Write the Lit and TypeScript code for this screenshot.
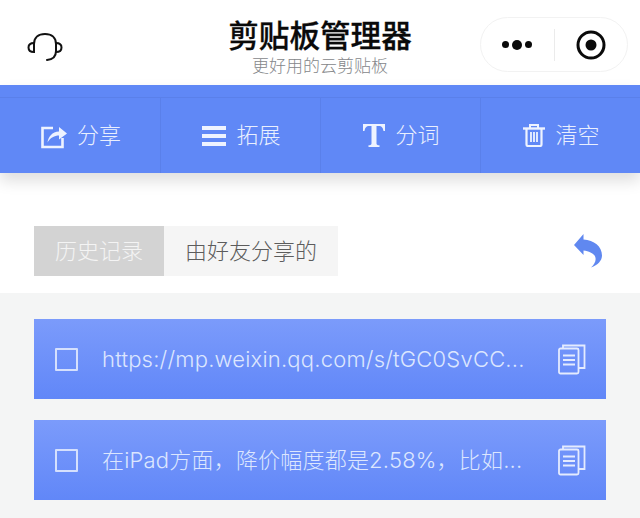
import { LitElement, html, css } from 'lit';
import { customElement } from 'lit/decorators.js';

const TOOLS = [
  { label: '分享', icon: 'share' },
  { label: '拓展', icon: 'menu' },
  { label: '分词', icon: 'text' },
  { label: '清空', icon: 'trash' },
];

const ITEMS = [
  'https://mp.weixin.qq.com/s/tGC0SvCC...',
  '在iPad方面，降价幅度都是2.58%，比如...',
];

@customElement('app-root')
export class AppRoot extends LitElement {
  static styles = css`
    :host {
      display: block;
      width: 640px;
      height: 518px;
      overflow: hidden;
      background: #f4f5f5;
      font-family: 'Inter', 'Noto Sans CJK SC', sans-serif;
      font-weight: 300;
    }

    * {
      box-sizing: border-box;
    }

    /* Header */
    .header {
      height: 85px;
      background: #fff;
      display: grid;
      grid-template-columns: 160px 1fr 160px;
      align-items: start;
    }

    .support {
      padding: 32px 0 0 27px;
    }

    .titles {
      display: flex;
      flex-direction: column;
      align-items: center;
    }

    .title {
      margin-top: 15px;
      font-family: 'Noto Sans CJK SC', sans-serif;
      font-size: 30.6px;
      line-height: 38px;
      font-weight: 500;
      -webkit-text-stroke: 0.3px #0a0a0a;
      color: #0a0a0a;
    }

    .subtitle {
      font-family: 'Noto Sans CJK SC', sans-serif;
      font-size: 17px;
      line-height: 20px;
      margin-top: 2px;
      color: #85878a;
    }

    .capsule {
      margin: 17px 12px 0 0;
      width: 148px;
      height: 55px;
      border: 1px solid #f2f2f2;
      border-radius: 28px;
      display: flex;
      align-items: center;
      justify-self: end;
    }

    .capsule .more,
    .capsule .target {
      flex: 1;
      display: flex;
      justify-content: center;
      align-items: center;
    }

    .capsule .more {
      border-right: 1px solid #ebebeb;
      height: 32px;
      gap: 3px;
    }

    .dot {
      width: 7px;
      height: 7px;
      border-radius: 50%;
      background: #0a0a0a;
    }

    .dot.mid {
      width: 10px;
      height: 10px;
    }

    /* Toolbar */
    .toolbar {
      height: 88px;
      padding-top: 12px;
      background: #6088f6;
      box-shadow: 0 8px 14px rgba(0, 0, 0, 0.13);
      position: relative;
    }

    .tools {
      height: 76px;
      border-top: 1px solid #5a80ea;
      display: grid;
      grid-template-columns: repeat(4, 1fr);
    }

    .tool {
      display: flex;
      align-items: center;
      justify-content: center;
      gap: 10px;
      border-left: 1px solid #5a80ea;
      font-family: 'Noto Sans CJK SC', sans-serif;
      font-size: 22px;
      font-weight: 300;
      color: #e9effe;
      padding-left: 2px;
    }

    .tool:first-child {
      border-left: none;
    }

    .tool span {
      margin-bottom: 6px;
    }

    .tool svg {
      display: block;
    }

    /* Tabs */
    .tabs-row {
      height: 120px;
      background: #fff;
      padding: 53px 34px 0;
      display: flex;
      justify-content: space-between;
      align-items: flex-start;
    }

    .tabs {
      display: flex;
      font-family: 'Noto Sans CJK SC', sans-serif;
      font-size: 22px;
      font-weight: 300;
      height: 50px;
    }

    .tab {
      display: flex;
      align-items: center;
      justify-content: center;
      color: #5c5c5c;
      background: #f5f5f5;
      width: 174px;
      padding-bottom: 5px;
    }

    .tab.active {
      width: 130px;
      background: #d3d3d3;
      color: #f4f4f4;
    }

    .back {
      margin: 8px 4px 0 0;
    }

    /* List */
    .list {
      padding: 26px 34px 0;
      display: flex;
      flex-direction: column;
      gap: 21px;
    }

    .card {
      height: 80px;
      background: linear-gradient(#7b9bfb, #6187f8);
      display: flex;
      align-items: center;
      padding: 0 20px 0 21px;
      color: #dce6fe;
    }

    .check {
      width: 23px;
      height: 23px;
      flex: none;
      border: 2px solid #d5e0fd;
      border-radius: 1px;
    }

    .text {
      margin-left: 24px;
      font-size: 22px;
      line-height: 30px;
      letter-spacing: 0.2px;
      white-space: nowrap;
    }

    .copy {
      margin-left: auto;
      display: block;
    }
  `;

  renderToolIcon(name: string) {
    if (name === 'share') {
      return html`<svg width="26" height="26" viewBox="0 0 26 26" fill="none">
        <path d="M12 5H1.5V24H21.5V15" stroke="#eef3ff" stroke-width="2.6" />
        <path d="M6.5 19.5C7.5 13.5 11 9 18 8.5V4L26 10.5 18 16.5V12.5C13.5 12.5 9.5 14.5 6.5 19.5Z" fill="#eef3ff" />
      </svg>`;
    }
    if (name === 'menu') {
      return html`<svg width="24" height="20" viewBox="0 0 24 20" fill="#eef3ff">
        <rect x="0" y="0" width="24" height="4" />
        <rect x="0" y="8" width="24" height="4" />
        <rect x="0" y="16" width="24" height="4" />
      </svg>`;
    }
    if (name === 'text') {
      return html`<svg width="22" height="23" viewBox="0 0 22 23" fill="#eef3ff">
        <path d="M0 0H22V7H20.5C20 4 19 2 15.5 2H13.5V19.5C13.5 20.8 14.2 21.2 16.5 21.3V23H5.5V21.3C7.8 21.2 8.5 20.8 8.5 19.5V2H6.5C3 2 2 4 1.5 7H0Z" />
      </svg>`;
    }
    return html`<svg width="22" height="23" viewBox="0 0 22 23" fill="none" stroke="#eef3ff">
      <path d="M0 4.5H22" stroke-width="2.4" />
      <path d="M7 4.5V1H15V4.5" stroke-width="2" />
      <path d="M3.5 4.5V20.5A1.5 1.5 0 0 0 5 22H17A1.5 1.5 0 0 0 18.5 20.5V4.5" stroke-width="2.2" />
      <path d="M8 8V18M11 8V18M14 8V18" stroke-width="1.8" />
    </svg>`;
  }

  render() {
    return html`
      <div class="header">
        <div class="support">
          <svg width="36" height="30" viewBox="0 0 36 30" fill="none" stroke="#111" stroke-width="2" stroke-linecap="round">
            <path d="M7 12C7 5.5 11.5 2 18 2S29 5.5 29 12V19C29 24 26 27.5 20 28" />
            <path d="M7 11C3.5 11 1.5 13 1.5 15.5S3.5 20 7 20Z" />
            <path d="M29 11C32.5 11 34.5 13 34.5 15.5S32.5 20 29 20Z" />
          </svg>
        </div>
        <div class="titles">
          <div class="title">剪贴板管理器</div>
          <div class="subtitle">更好用的云剪贴板</div>
        </div>
        <div class="capsule">
          <div class="more">
            <span class="dot"></span><span class="dot mid"></span><span class="dot"></span>
          </div>
          <div class="target">
            <svg width="30" height="30" viewBox="0 0 30 30">
              <circle cx="15" cy="15" r="13" fill="none" stroke="#0a0a0a" stroke-width="3" />
              <circle cx="15" cy="15" r="5.5" fill="#0a0a0a" />
            </svg>
          </div>
        </div>
      </div>

      <div class="toolbar">
        <div class="tools">
          ${TOOLS.map(t => html`<div class="tool">${this.renderToolIcon(t.icon)}<span>${t.label}</span></div>`)}
        </div>
      </div>

      <div class="tabs-row">
        <div class="tabs">
          <div class="tab active">历史记录</div>
          <div class="tab">由好友分享的</div>
        </div>
        <svg class="back" width="28" height="34" viewBox="0 0 28 34">
          <path d="M0 11L9.5 0V5.5C20 6 28 12.5 28 21.5C28 26.5 24 31 17 33.5C20.5 30 22 27 21.5 24C21 20 16 17.5 9.5 16.5V21Z" fill="#6088f0" />
        </svg>
      </div>

      <div class="list">
        ${ITEMS.map(item => html`
          <div class="card">
            <div class="check"></div>
            <div class="text">${item}</div>
            <svg class="copy" width="28" height="31" viewBox="0 0 28 31" fill="none" stroke="#e4ebfe" stroke-width="1.8">
              <path d="M5 4V1.5H26.5V24H20.5" />
              <rect x="1" y="4.5" width="19.5" height="25" rx="1.5" />
              <path d="M5 11.5H17M5 16H17M5 20.5H17" />
            </svg>
          </div>
        `)}
      </div>
    `;
  }
}
